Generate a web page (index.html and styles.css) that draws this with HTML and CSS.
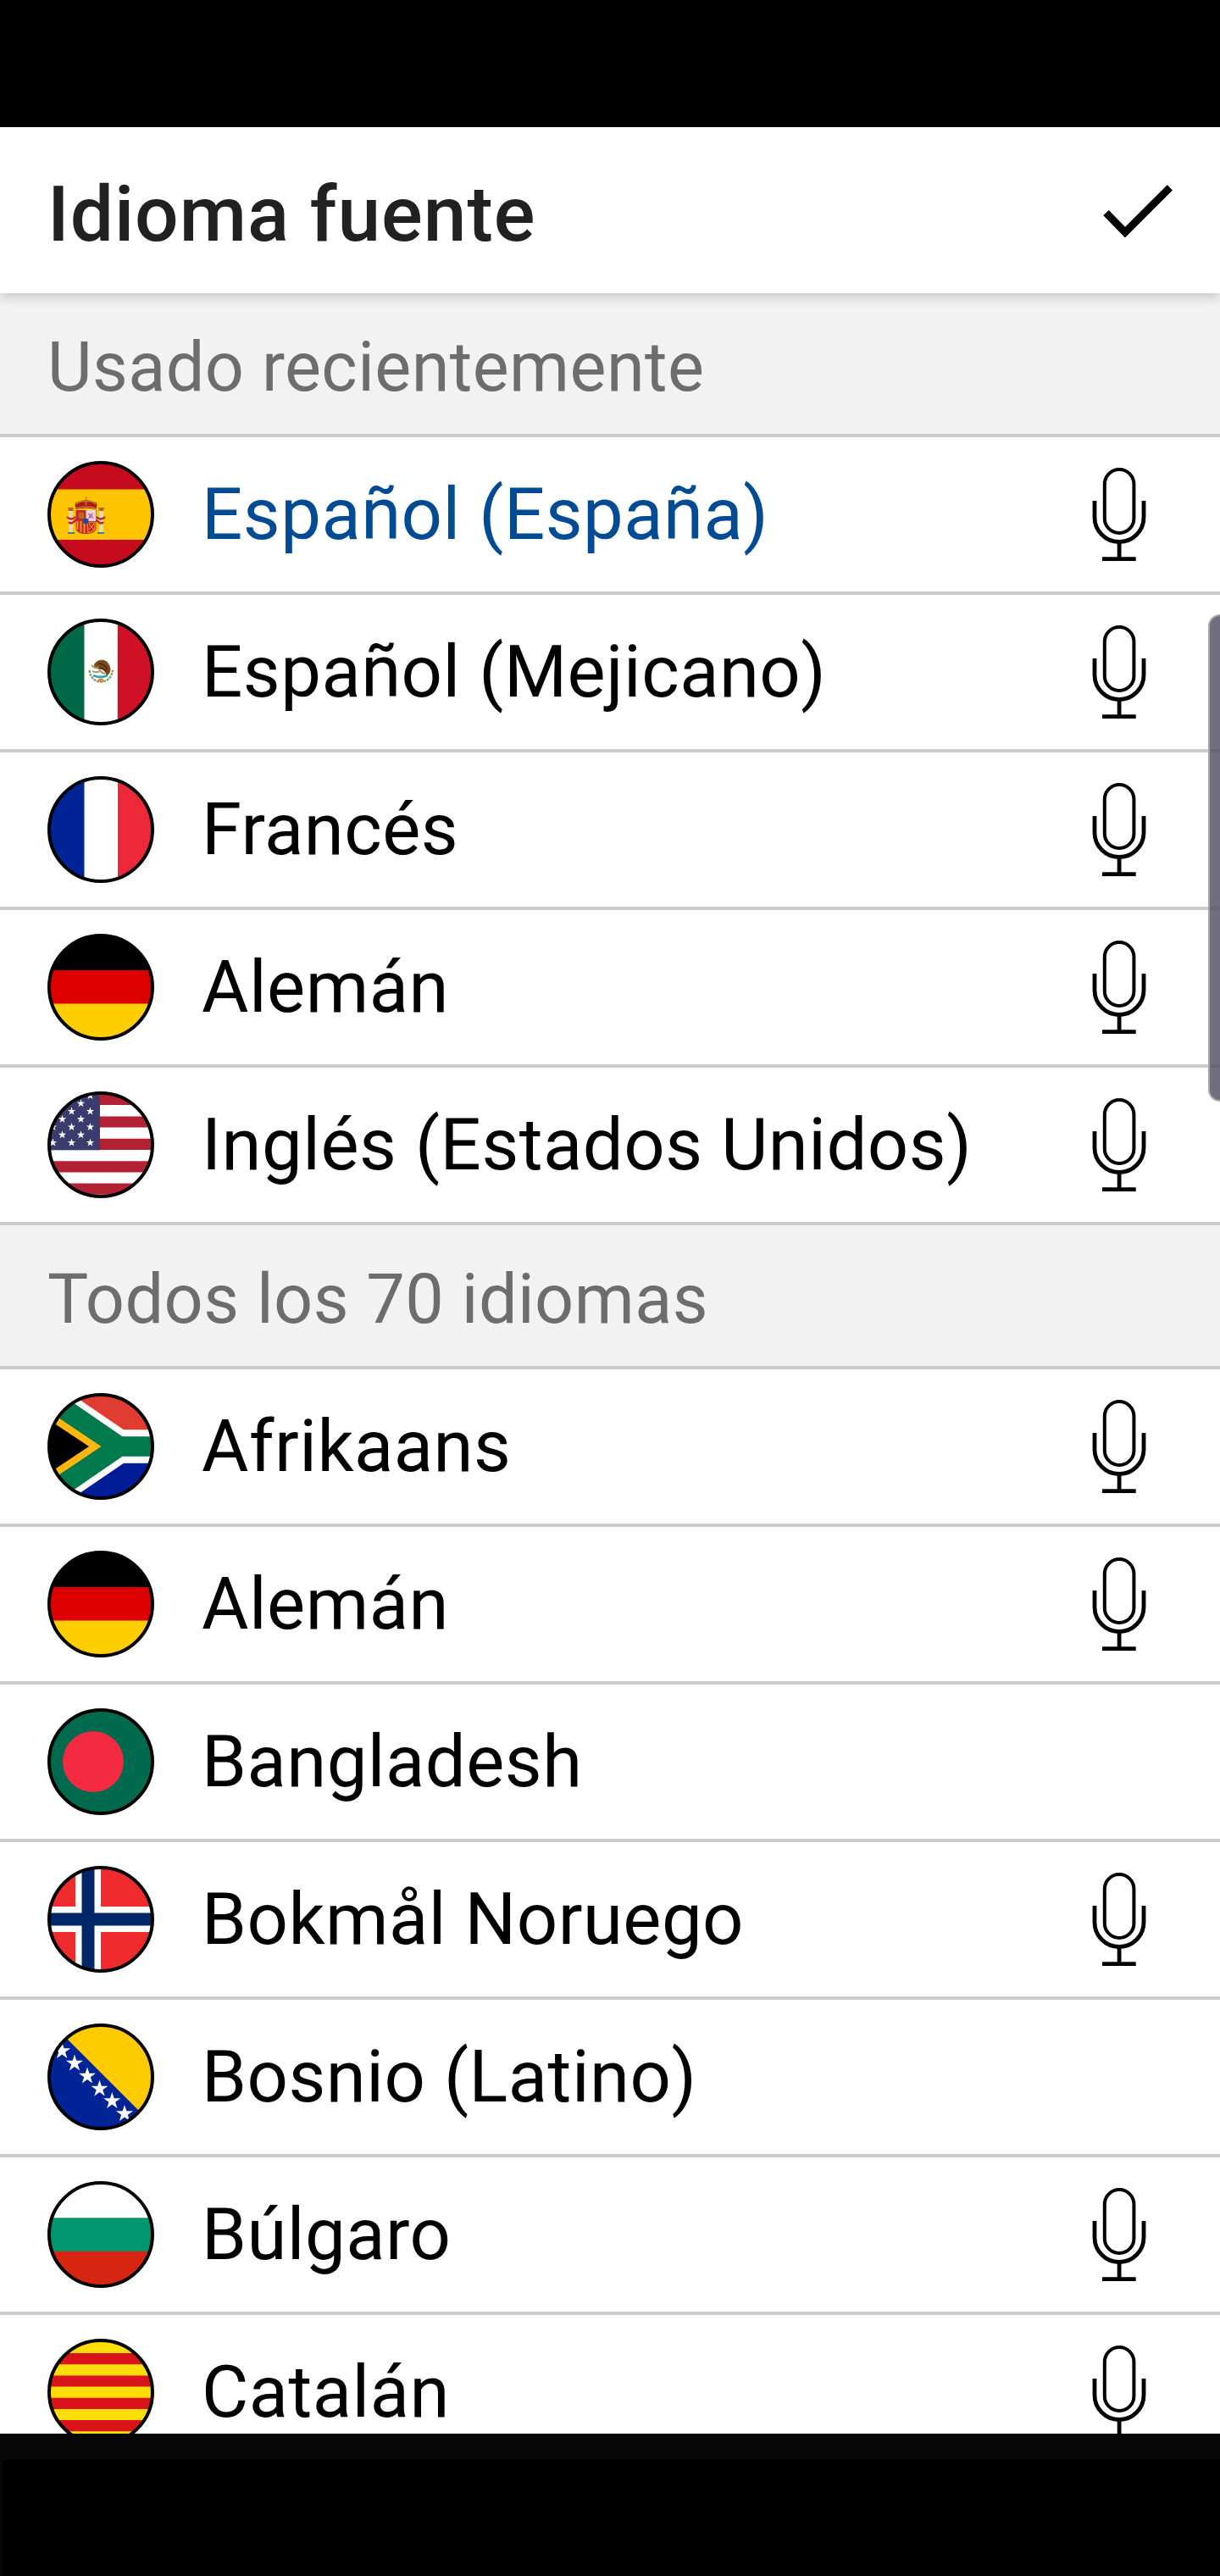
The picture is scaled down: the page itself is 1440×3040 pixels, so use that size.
FILE: index.html
```html
<!DOCTYPE html>
<html lang="es">
<head>
    <meta charset="UTF-8" />
    <title>Idioma fuente</title>
    <link rel="stylesheet" href="styles.css">
</head>
<body>

<svg class="defs" width="0" height="0">
    <defs>
        <clipPath id="round"><circle cx="63" cy="63" r="61" /></clipPath>

        <polygon id="star" points="0,-1 .2245,-.309 .951,-.309 .363,.118 .588,.809 0,.382 -.588,.809 -.363,.118 -.951,-.309 -.2245,-.309" fill="#fff" />

        <symbol id="mic" viewBox="0 0 64 110">
            <g fill="none" stroke="#000">
                <rect x="14.8" y="2" width="34.6" height="75" rx="17.3" stroke-width="4" />
                <path d="M3 39v19.5a29 29 0 0 0 58 0V39" stroke-width="4.8" />
                <path d="M32.1 87v19" stroke-width="4.8" />
                <path d="M12 107.6h39.7" stroke-width="4.6" />
            </g>
        </symbol>

        <symbol id="es" viewBox="0 0 126 126">
            <rect width="126" height="126" fill="#c60b1e" />
            <rect y="33.5" width="126" height="59.5" fill="#ffc400" />
            <g>
                <rect x="25" y="59" width="5" height="25" fill="#dcd8c8" />
                <rect x="61" y="59" width="5" height="25" fill="#dcd8c8" />
                <path d="M24 84h8v2h-8zM59 84h8v2h-8z" fill="#5a7c7c" />
                <path d="M24 55h7l-1 4h-5zM60 55h7l-1 4h-5z" fill="#b5651d" />
                <path d="M23 66q5 5 10 0M34 69q-6 7-9 3M68 66q-5 5-10 0M57 69q6 7 9 3" fill="none" stroke="#b8252c" stroke-width="2.4" />
                <path d="M33.5 58h24v20q0 8-12 8t-12-8z" fill="#c8252c" />
                <path d="M45.5 58H57v13H45.5z" fill="#e6d5da" />
                <path d="M48 61l3 2 3-2-1 4 2 3-4-1-3 2 1-4z" fill="#d06aa8" />
                <path d="M37 61h6v7h-6z" fill="#a8741a" />
                <path d="M35.5 71v10M39.5 71v13M43.5 71v14" stroke="#e8a81c" stroke-width="1.8" />
                <path d="M47 72.5h9v5q0 6-8 7z" fill="none" stroke="#d8801c" stroke-width="1.6" />
                <path d="M49 74l6 7M55 74l-6 7" stroke="#e8a81c" stroke-width="1" />
                <circle cx="45.3" cy="71" r="3.3" fill="#1a4b8c" />
                <path d="M33.5 57l-1-5q0-4 6-4 4-2 7-2t7 2q6 0 6 4l-1 5q-12-3-24 0z" fill="#b3141f" />
                <path d="M33.5 56q12-4 24 0M34 51q5-5 11.5-3 6-2 11.5 3M45.5 42v10" fill="none" stroke="#b8801c" stroke-width="1.6" />
            </g>
        </symbol>

        <symbol id="mx" viewBox="0 0 126 126">
            <rect width="126" height="126" fill="#fff" />
            <rect width="43.5" height="126" fill="#006847" />
            <rect x="82.8" width="44" height="126" fill="#ce1126" />
            <g fill="none">
                <path d="M49.5 61q2 13 13.5 13.5Q75 74 77 61" stroke="#8c9a5c" stroke-width="2.4" stroke-dasharray="3 1" />
                <path d="M54 67q9 4 17 0" stroke="#2ca5b5" stroke-width="3" />
                <path d="M60 71h6v4h-6z" fill="#e08a3c" />
                <path d="M55 54q4-6 12-5 7 3 7.500 11-.5 6-5 7-1-6-6-7-6 0-8-3z" fill="#7a4a1e" />
                <path d="M60 53q8 0 11 8M62 57q5 2 7 6" stroke="#4a2a10" stroke-width="1.5" />
                <path d="M52 55q5 5 8 2M53 62q6 3 9-1 3 4 6 4" stroke="#a8905c" stroke-width="1.8" />
            </g>
        </symbol>

        <symbol id="fr" viewBox="0 0 126 126">
            <rect width="126" height="126" fill="#fff" />
            <rect width="43.5" height="126" fill="#002395" />
            <rect x="83" width="43" height="126" fill="#ed2939" />
        </symbol>

        <symbol id="de" viewBox="0 0 126 126">
            <rect width="126" height="126" fill="#000" />
            <rect y="43" width="126" height="40" fill="#d00" />
            <rect y="82.5" width="126" height="44" fill="#ffce00" />
        </symbol>

        <symbol id="us" viewBox="0 0 126 126">
            <rect width="126" height="126" fill="#fff" />
            <path d="M0 9.3h126M0 36h126M0 62.4h126M0 88.8h126M0 115.2h126" stroke="#b22234" stroke-width="13.2" />
            <rect width="62" height="69.3" fill="#3c3b6e" />
            <g>
                <use href="#star" transform="translate(50.5 5) scale(5)" />
                <use href="#star" transform="translate(39.5 14.2) scale(5)" />
                <use href="#star" transform="translate(28.5 23.5) scale(5)" />
                <use href="#star" transform="translate(50.5 23.5) scale(5)" />
                <use href="#star" transform="translate(17.5 32.8) scale(5)" />
                <use href="#star" transform="translate(39.5 32.8) scale(5)" />
                <use href="#star" transform="translate(6.5 42) scale(5)" />
                <use href="#star" transform="translate(28.5 42) scale(5)" />
                <use href="#star" transform="translate(50.5 42) scale(5)" />
                <use href="#star" transform="translate(17.5 51.3) scale(5)" />
                <use href="#star" transform="translate(39.5 51.3) scale(5)" />
                <use href="#star" transform="translate(6.5 60.5) scale(5)" />
                <use href="#star" transform="translate(28.5 60.5) scale(5)" />
                <use href="#star" transform="translate(50.5 60.5) scale(5)" />
            </g>
        </symbol>

        <symbol id="za" viewBox="0 0 126 126">
            <rect width="126" height="63" fill="#e03c31" />
            <rect y="63" width="126" height="63" fill="#001c96" />
            <path d="M0-18L90 43.200h36v39.600H90L0 144z" fill="#fff" />
            <path d="M0-9.500L88.500 51.300H126v23.400H88.500L0 135.500z" fill="#007a4d" />
            <path d="M0 20.500L63.500 63 0 105.500z" fill="#ffb612" />
            <path d="M0 30.500L49 63 0 95.500z" fill="#000" />
        </symbol>

        <symbol id="bd" viewBox="0 0 126 126">
            <rect width="126" height="126" fill="#006a4e" />
            <circle cx="54" cy="63" r="36" fill="#f42a41" />
        </symbol>

        <symbol id="no" viewBox="0 0 126 126">
            <rect width="126" height="126" fill="#ef2b2d" />
            <path d="M48 0v126M0 63h126" stroke="#fff" stroke-width="30" />
            <path d="M48 0v126M0 63h126" stroke="#002868" stroke-width="15" />
        </symbol>

        <symbol id="ba" viewBox="0 0 126 126">
            <rect width="126" height="126" fill="#002395" />
            <path d="M4-1L126 121V-1z" fill="#fecb00" />
            <g>
                <use href="#star" transform="translate(17.2 32.5) scale(10.5)" />
                <use href="#star" transform="translate(32 47) scale(10.5)" />
                <use href="#star" transform="translate(47 62) scale(10.5)" />
                <use href="#star" transform="translate(61.5 77) scale(10.5)" />
                <use href="#star" transform="translate(76.3 91.5) scale(10.5)" />
                <use href="#star" transform="translate(91 106.5) scale(10.5)" />
            </g>
        </symbol>

        <symbol id="bg" viewBox="0 0 126 126">
            <rect width="126" height="126" fill="#fff" />
            <rect y="43.3" width="126" height="40" fill="#00966e" />
            <rect y="82.8" width="126" height="44" fill="#d62612" />
        </symbol>

        <symbol id="cat" viewBox="0 0 126 126">
            <rect width="126" height="126" fill="#fcdd09" />
            <path d="M0 23.7h126M0 50h126M0 76.4h126M0 102.7h126" stroke="#da121a" stroke-width="13.2" />
        </symbol>
    </defs>
</svg>

<div class="status-bar"></div>

<header class="header">
    <h1>Idioma fuente</h1>
    <svg class="check" width="82" height="63" viewBox="0 0 82 63"><path d="M3.5 33.1L26 56.1 78.9 3.3" fill="none" stroke="#000" stroke-width="8.9" /></svg>
</header>

<main class="languages" id="languages"></main>

<div class="scroll-handle"></div>
<div class="nav-bar"></div>

<script>
    const sections = [
        {
            title: "Usado recientemente",
            items: [
                { name: "Español (España)", flag: "es", mic: true, selected: true },
                { name: "Español (Mejicano)", flag: "mx", mic: true },
                { name: "Francés", flag: "fr", mic: true },
                { name: "Alemán", flag: "de", mic: true },
                { name: "Inglés (Estados Unidos)", flag: "us", mic: true }
            ]
        },
        {
            title: "Todos los 70 idiomas",
            items: [
                { name: "Afrikaans", flag: "za", mic: true },
                { name: "Alemán", flag: "de", mic: true },
                { name: "Bangladesh", flag: "bd", mic: false },
                { name: "Bokmål Noruego", flag: "no", mic: true },
                { name: "Bosnio (Latino)", flag: "ba", mic: false },
                { name: "Búlgaro", flag: "bg", mic: true },
                { name: "Catalán", flag: "cat", mic: true }
            ]
        }
    ];

    document.getElementById('languages').innerHTML = sections.map(section => `
        <h2 class="section-title">${section.title}</h2>
        <ul class="list">
            ${section.items.map(item => `
                <li class="row${item.selected ? ' selected' : ''}">
                    <svg class="flag" viewBox="0 0 126 126">
                        <g clip-path="url(#round)"><use href="#${item.flag}" width="126" height="126" /></g>
                        <circle cx="63" cy="63" r="61" fill="none" stroke="#000" stroke-width="4" />
                    </svg>
                    <span class="name">${item.name}</span>
                    ${item.mic ? '<svg class="mic"><use href="#mic" /></svg>' : ''}
                </li>
            `).join('')}
        </ul>
    `).join('');
</script>

</body>
</html>
```

FILE: styles.css
```css
* {
    box-sizing: border-box;
}
body {
    margin: 0;
    width: 1440px;
    height: 3040px;
    display: flex;
    flex-direction: column;
    position: relative;
    overflow: hidden;
    background-color: #fff;
    font-family: Roboto, sans-serif;
    color: #000;
}
.defs {
    position: absolute;
}
.status-bar {
    height: 150px;
    flex: none;
    background-color: #000;
}
.header {
    height: 196px;
    flex: none;
    display: flex;
    align-items: center;
    justify-content: space-between;
    padding: 0 56px;
    background-color: #fff;
    box-shadow: 0 3px 14px rgba(0, 0, 0, 0.22);
    z-index: 1;
}
h1 {
    margin: 0;
    padding-top: 10px;
    font-size: 91px;
    font-weight: 500;
    letter-spacing: 0.95px;
    color: #212121;
}
.check {
    margin-top: 3px;
}
.languages {
    flex: 1;
    min-height: 0;
    overflow: hidden;
}
.section-title {
    margin: 0;
    height: 170px;
    padding: 9px 56px 0;
    line-height: 157px;
    font-size: 81px;
    font-weight: 400;
    letter-spacing: 0.42px;
    color: #6d6d6d;
    background-color: #f2f2f2;
    border-bottom: 4px solid #cbcbcb;
}
.list {
    margin: 0;
    padding: 0;
    list-style: none;
}
.row {
    height: 186px;
    display: flex;
    align-items: center;
    padding: 0 87px 0 56px;
    border-bottom: 4px solid #cbcbcb;
}
.flag {
    width: 126px;
    height: 126px;
    flex: none;
}
.name {
    flex: 1;
    margin-left: 56px;
    font-size: 85px;
    letter-spacing: 0.5px;
    white-space: nowrap;
}
.selected .name {
    color: #004b93;
}
.mic {
    width: 64px;
    height: 110px;
    flex: none;
}
.scroll-handle {
    position: absolute;
    top: 725px;
    right: 0;
    width: 14px;
    height: 575px;
    background-color: rgba(88, 86, 102, 0.85);
    border: 2px solid #a8a8aa;
    border-right: none;
    border-radius: 16px 0 0 16px;
}
.nav-bar {
    height: 168px;
    flex: none;
    background-color: #000;
    border-top: 31px solid #070707;
    border-left: 2px solid #070707;
}
```
